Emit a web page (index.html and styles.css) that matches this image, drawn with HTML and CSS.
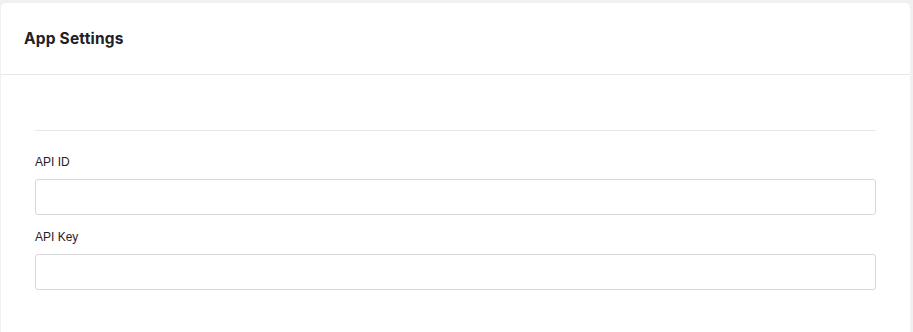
FILE: index.html
```html
<!DOCTYPE html>
<html lang="en">
<head>
    <meta charset="UTF-8">
    <meta name="viewport" content="width=device-width, initial-scale=1.0">
    <title>App Settings</title>
    <link rel="stylesheet" href="styles.css">
</head>
<body>
    <div class="settings-card">
        <div class="card-header">
            <h2>App Settings</h2>
        </div>

        <div class="card-body">
            <div class="section-divider"></div>

            <div class="form-group">
                <label for="apiId">API ID</label>
                <input type="text" id="apiId" class="form-input">
            </div>

            <div class="form-group">
                <label for="apiKey">API Key</label>
                <input type="text" id="apiKey" class="form-input">
            </div>
        </div>
    </div>
</body>
</html>
```

FILE: styles.css
```css
:root {
    --page-bg: #f1f1f1;
    --card-bg: #ffffff;
    --divider: #e8e8e8;
    --input-border: #d8d8d8;
    --text-dark: #1f2124;
}

* {
    margin: 0;
    padding: 0;
    box-sizing: border-box;
}

body {
    font-family: "Liberation Sans", Arial, sans-serif;
    background: var(--page-bg);
    color: var(--text-dark);
    height: 332px;
    overflow: hidden;
    padding: 3px 3px 0 1px;
}

.settings-card {
    background: var(--card-bg);
    border-radius: 5px 5px 0 0;
    height: 340px;
}

.card-header {
    height: 72px;
    padding: 0 23px;
    display: flex;
    align-items: center;
    border-bottom: 1px solid var(--divider);
}

.card-header h2 {
    font-family: Inter, sans-serif;
    font-size: 15.5px;
    font-weight: 700;
    letter-spacing: 0.2px;
    margin-top: -1px;
}

.card-body {
    padding: 55px 34px 0 34px;
}

.section-divider {
    height: 1px;
    background: var(--divider);
    margin-bottom: 23px;
}

.form-group {
    display: flex;
    flex-direction: column;
    margin-bottom: 14px;
}

.form-group label {
    font-size: 12px;
    line-height: 17px;
    margin-bottom: 8px;
}

.form-input {
    height: 36px;
    border: 1px solid var(--input-border);
    border-radius: 3px;
    padding: 0 10px;
    font-size: 13px;
    outline: none;
}
```
